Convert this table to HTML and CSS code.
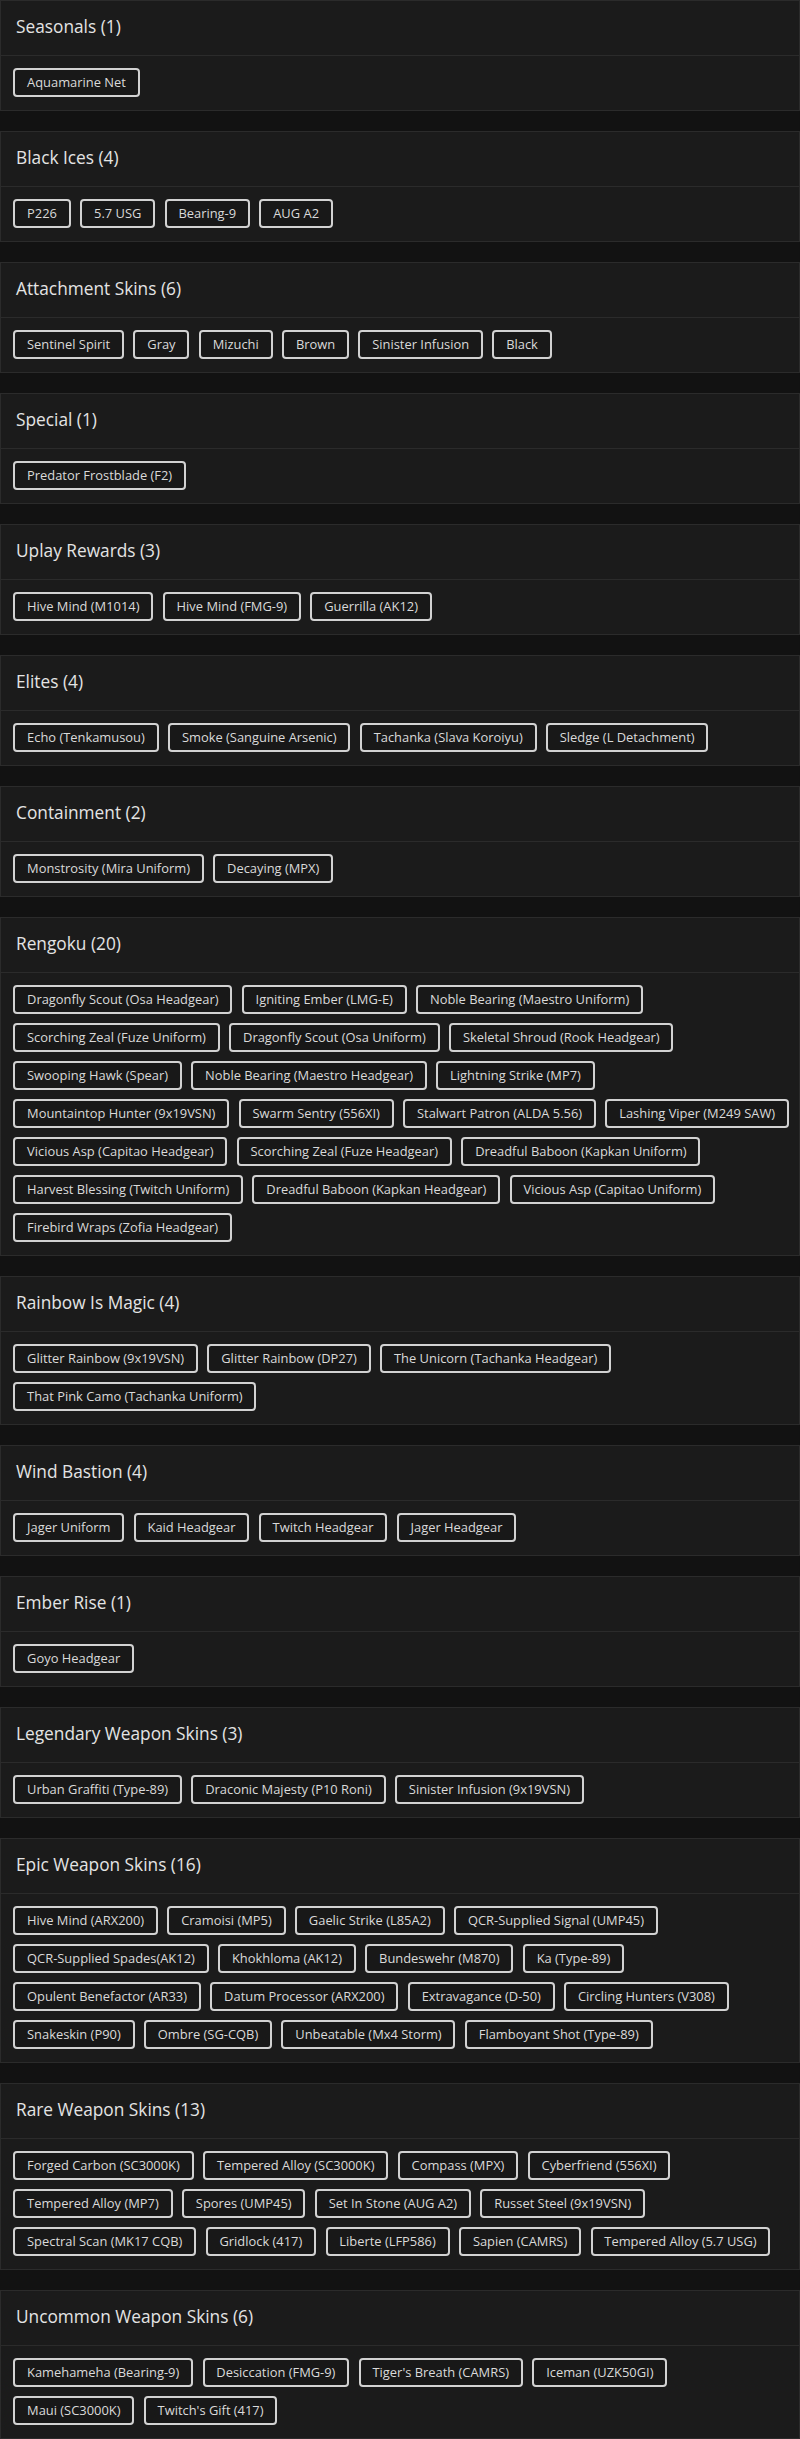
FILE: index.html
```html
<!DOCTYPE html>
<html lang="en">
<head>
<meta charset="utf-8">
<title>Skins</title>
<link rel="stylesheet" href="styles.css">
</head>
<body>
<main class="list">
  <section class="card"><header class="card-head"><h2 class="card-title">Seasonals (1)</h2></header>
    <div class="chips"><span class="chip">Aquamarine Net</span></div></section>

  <section class="card"><header class="card-head"><h2 class="card-title">Black Ices (4)</h2></header>
    <div class="chips"><span class="chip">P226</span><span class="chip">5.7 USG</span><span class="chip">Bearing-9</span><span class="chip">AUG A2</span></div></section>

  <section class="card"><header class="card-head"><h2 class="card-title">Attachment Skins (6)</h2></header>
    <div class="chips"><span class="chip">Sentinel Spirit</span><span class="chip">Gray</span><span class="chip">Mizuchi</span><span class="chip">Brown</span><span class="chip">Sinister Infusion</span><span class="chip">Black</span></div></section>

  <section class="card"><header class="card-head"><h2 class="card-title">Special (1)</h2></header>
    <div class="chips"><span class="chip">Predator Frostblade (F2)</span></div></section>

  <section class="card"><header class="card-head"><h2 class="card-title">Uplay Rewards (3)</h2></header>
    <div class="chips"><span class="chip">Hive Mind (M1014)</span><span class="chip">Hive Mind (FMG-9)</span><span class="chip">Guerrilla (AK12)</span></div></section>

  <section class="card"><header class="card-head"><h2 class="card-title">Elites (4)</h2></header>
    <div class="chips"><span class="chip">Echo (Tenkamusou)</span><span class="chip">Smoke (Sanguine Arsenic)</span><span class="chip">Tachanka (Slava Koroiyu)</span><span class="chip">Sledge (L Detachment)</span></div></section>

  <section class="card"><header class="card-head"><h2 class="card-title">Containment (2)</h2></header>
    <div class="chips"><span class="chip">Monstrosity (Mira Uniform)</span><span class="chip">Decaying (MPX)</span></div></section>

  <section class="card"><header class="card-head"><h2 class="card-title">Rengoku (20)</h2></header>
    <div class="chips"><span class="chip">Dragonfly Scout (Osa Headgear)</span><span class="chip">Igniting Ember (LMG-E)</span><span class="chip">Noble Bearing (Maestro Uniform)</span><span class="chip">Scorching Zeal (Fuze Uniform)</span><span class="chip">Dragonfly Scout (Osa Uniform)</span><span class="chip">Skeletal Shroud (Rook Headgear)</span><span class="chip">Swooping Hawk (Spear)</span><span class="chip">Noble Bearing (Maestro Headgear)</span><span class="chip">Lightning Strike (MP7)</span><span class="chip">Mountaintop Hunter (9x19VSN)</span><span class="chip">Swarm Sentry (556XI)</span><span class="chip">Stalwart Patron (ALDA 5.56)</span><span class="chip">Lashing Viper (M249 SAW)</span><span class="chip">Vicious Asp (Capitao Headgear)</span><span class="chip">Scorching Zeal (Fuze Headgear)</span><span class="chip">Dreadful Baboon (Kapkan Uniform)</span><span class="chip">Harvest Blessing (Twitch Uniform)</span><span class="chip">Dreadful Baboon (Kapkan Headgear)</span><span class="chip">Vicious Asp (Capitao Uniform)</span><span class="chip">Firebird Wraps (Zofia Headgear)</span></div></section>

  <section class="card"><header class="card-head"><h2 class="card-title">Rainbow Is Magic (4)</h2></header>
    <div class="chips"><span class="chip">Glitter Rainbow (9x19VSN)</span><span class="chip">Glitter Rainbow (DP27)</span><span class="chip">The Unicorn (Tachanka Headgear)</span><span class="chip">That Pink Camo (Tachanka Uniform)</span></div></section>

  <section class="card"><header class="card-head"><h2 class="card-title">Wind Bastion (4)</h2></header>
    <div class="chips"><span class="chip">Jager Uniform</span><span class="chip">Kaid Headgear</span><span class="chip">Twitch Headgear</span><span class="chip">Jager Headgear</span></div></section>

  <section class="card"><header class="card-head"><h2 class="card-title">Ember Rise (1)</h2></header>
    <div class="chips"><span class="chip">Goyo Headgear</span></div></section>

  <section class="card"><header class="card-head"><h2 class="card-title">Legendary Weapon Skins (3)</h2></header>
    <div class="chips"><span class="chip">Urban Graffiti (Type-89)</span><span class="chip">Draconic Majesty (P10 Roni)</span><span class="chip">Sinister Infusion (9x19VSN)</span></div></section>

  <section class="card"><header class="card-head"><h2 class="card-title">Epic Weapon Skins (16)</h2></header>
    <div class="chips"><span class="chip">Hive Mind (ARX200)</span><span class="chip">Cramoisi (MP5)</span><span class="chip">Gaelic Strike (L85A2)</span><span class="chip">QCR-Supplied Signal (UMP45)</span><span class="chip">QCR-Supplied Spades(AK12)</span><span class="chip">Khokhloma (AK12)</span><span class="chip">Bundeswehr (M870)</span><span class="chip">Ka (Type-89)</span><span class="chip">Opulent Benefactor (AR33)</span><span class="chip">Datum Processor (ARX200)</span><span class="chip">Extravagance (D-50)</span><span class="chip">Circling Hunters (V308)</span><span class="chip">Snakeskin (P90)</span><span class="chip">Ombre (SG-CQB)</span><span class="chip">Unbeatable (Mx4 Storm)</span><span class="chip">Flamboyant Shot (Type-89)</span></div></section>

  <section class="card"><header class="card-head"><h2 class="card-title">Rare Weapon Skins (13)</h2></header>
    <div class="chips"><span class="chip">Forged Carbon (SC3000K)</span><span class="chip">Tempered Alloy (SC3000K)</span><span class="chip">Compass (MPX)</span><span class="chip">Cyberfriend (556XI)</span><span class="chip">Tempered Alloy (MP7)</span><span class="chip">Spores (UMP45)</span><span class="chip">Set In Stone (AUG A2)</span><span class="chip">Russet Steel (9x19VSN)</span><span class="chip">Spectral Scan (MK17 CQB)</span><span class="chip">Gridlock (417)</span><span class="chip">Liberte (LFP586)</span><span class="chip">Sapien (CAMRS)</span><span class="chip">Tempered Alloy (5.7 USG)</span></div></section>

  <section class="card"><header class="card-head"><h2 class="card-title">Uncommon Weapon Skins (6)</h2></header>
    <div class="chips"><span class="chip">Kamehameha (Bearing-9)</span><span class="chip">Desiccation (FMG-9)</span><span class="chip">Tiger's Breath (CAMRS)</span><span class="chip">Iceman (UZK50GI)</span><span class="chip">Maui (SC3000K)</span><span class="chip">Twitch's Gift (417)</span></div></section>
</main>
</body>
</html>
```
FILE: styles.css
```css
html, body {
  margin: 0;
  padding: 0;
  background: #121212;
}
body {
  font-family: "Open Sans", "Noto Sans", sans-serif;
  color: #dcdcdc;
}
.list {
  display: flex;
  flex-direction: column;
  gap: 20px;
}
.card {
  background: #1b1b1b;
  border: 1px solid #2b2b2b;
}
.card-head {
  height: 51px;
  padding: 0 15px 3px;
  border-bottom: 1px solid #2b2b2b;
  display: flex;
  align-items: center;
}
.card-title {
  margin: 0;
  font-size: 17.3px;
  font-weight: 500;
  line-height: 22px;
  color: #e4e4e4;
}
.chips {
  display: flex;
  flex-wrap: wrap;
  padding: 7.5px 4px 8.5px 7.5px;
}
.chip {
  margin: 4.75px;
  height: 28.5px;
  box-sizing: border-box;
  padding: 0 11.8px;
  border: 2px solid #d2d2d2;
  border-radius: 4px;
  background: #181818;
  font-size: 12.9px;
  line-height: 24.5px;
  color: #dadada;
  white-space: nowrap;
}
```
